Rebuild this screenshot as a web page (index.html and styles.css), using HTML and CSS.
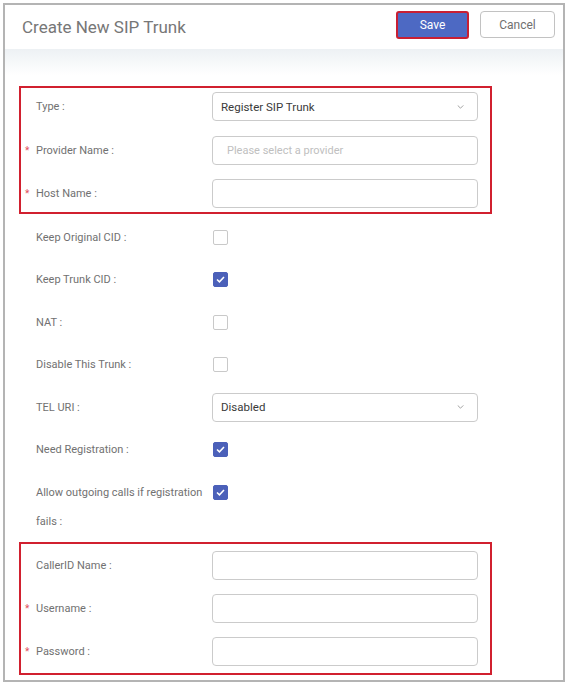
FILE: index.html
```html
<!DOCTYPE html>
<html lang="en">
<head>
<meta charset="utf-8">
<title>Create New SIP Trunk</title>
<link rel="stylesheet" href="styles.css">
</head>
<body>
<div class="frame">
  <header class="header">
    <h1 class="title">Create New SIP Trunk</h1>
    <div class="actions">
      <button class="btn btn-save">Save</button>
      <button class="btn btn-cancel">Cancel</button>
    </div>
  </header>
  <main class="main">
    <section class="box box-top">
      <div class="row">
        <label class="label">Type :</label>
        <div class="select"><span>Register SIP Trunk</span><svg class="chev" viewBox="0 0 8 5" width="7" height="4"><path d="M0.5 0.5 L4 4 L7.5 0.5" fill="none" stroke="#8a8a8a" stroke-width="1"/></svg></div>
      </div>
      <div class="row">
        <label class="label"><span class="req">*</span>Provider Name :</label>
        <div class="input placeholder">Please select a provider</div>
      </div>
      <div class="row">
        <label class="label"><span class="req">*</span>Host Name :</label>
        <div class="input"></div>
      </div>
    </section>

    <div class="plain">
      <div class="row">
        <label class="label">Keep Original CID :</label>
        <span class="check"></span>
      </div>
      <div class="row">
        <label class="label">Keep Trunk CID :</label>
        <span class="check checked"><svg viewBox="0 0 10 8" width="9" height="7"><path d="M1 4 L3.8 6.6 L9 1.2" fill="none" stroke="#fff" stroke-width="1.8"/></svg></span>
      </div>
      <div class="row">
        <label class="label">NAT :</label>
        <span class="check"></span>
      </div>
      <div class="row">
        <label class="label">Disable This Trunk :</label>
        <span class="check"></span>
      </div>
      <div class="row">
        <label class="label">TEL URI :</label>
        <div class="select"><span>Disabled</span><svg class="chev" viewBox="0 0 8 5" width="7" height="4"><path d="M0.5 0.5 L4 4 L7.5 0.5" fill="none" stroke="#8a8a8a" stroke-width="1"/></svg></div>
      </div>
      <div class="row">
        <label class="label">Need Registration :</label>
        <span class="check checked"><svg viewBox="0 0 10 8" width="9" height="7"><path d="M1 4 L3.8 6.6 L9 1.2" fill="none" stroke="#fff" stroke-width="1.8"/></svg></span>
      </div>
      <div class="row row-top">
        <label class="label">Allow outgoing calls if registration fails :</label>
        <span class="check checked check-top"><svg viewBox="0 0 10 8" width="9" height="7"><path d="M1 4 L3.8 6.6 L9 1.2" fill="none" stroke="#fff" stroke-width="1.8"/></svg></span>
      </div>
    </div>

    <section class="box box-bottom">
      <div class="row">
        <label class="label">CallerID Name :</label>
        <div class="input"></div>
      </div>
      <div class="row">
        <label class="label"><span class="req">*</span>Username :</label>
        <div class="input"></div>
      </div>
      <div class="row">
        <label class="label"><span class="req">*</span>Password :</label>
        <div class="input"></div>
      </div>
    </section>
  </main>
</div>
</body>
</html>
```
FILE: styles.css
```css
* { box-sizing: border-box; }
html, body { margin: 0; padding: 0; background: #fff; }
body {
  font-family: Roboto, "Liberation Sans", Arial, sans-serif;
  color: #666;
}
.frame {
  margin: 3px;
  width: 562px;
  height: 679px;
  border: 2px solid #b4b4b4;
  overflow: hidden;
  background: #fff;
}
.header {
  height: 44px;
  display: flex;
  justify-content: space-between;
  align-items: flex-start;
  padding: 0 8px 0 17px;
}
.title {
  margin: 0;
  font-weight: 400;
  font-size: 17px;
  line-height: 44px;
  color: #777;
}
.actions {
  display: flex;
  gap: 11px;
  margin-top: 6px;
}
.btn {
  font-family: inherit;
  font-size: 12px;
  height: 28px;
  border-radius: 3px;
  padding: 0;
  cursor: pointer;
}
.btn-save {
  width: 73px;
  background: #4d69c3;
  color: #fff;
  border: 2px solid #c81f33;
}
.btn-cancel {
  width: 75px;
  height: 27px;
  background: #fff;
  color: #707070;
  border: 1px solid #c2c2c2;
  border-radius: 4px;
}
.main {
  background: linear-gradient(#edf1f4, #fff 26px);
  padding: 37px 0 0 14px;
}
.box {
  width: 473px;
  border: 2px solid #d1202f;
  padding: 4px 12px 4px 15px;
  display: flex;
  flex-direction: column;
  gap: 14.5px;
}
.box-bottom {
  padding-top: 7px;
  padding-bottom: 7px;
  gap: 14px;
}
.plain {
  padding: 8.5px 0 6.5px 17px;
  display: flex;
  flex-direction: column;
  gap: 13.5px;
}
.row {
  display: flex;
  align-items: center;
  min-height: 29px;
}
.row-top { align-items: flex-start; }
.label {
  width: 176px;
  flex: none;
  font-size: 11px;
  line-height: 29px;
  color: #717171;
  padding-right: 4px;
}
.req {
  display: inline-block;
  width: 11px;
  margin-left: -11px;
  color: #e0505a;
  font-size: 10px;
}
.select, .input {
  width: 266px;
  height: 29px;
  border: 1px solid #cbcbcb;
  border-radius: 4px;
  background: #fff;
  font-size: 11.5px;
  color: #3a3a3a;
  display: flex;
  align-items: center;
}
.select {
  justify-content: space-between;
  padding: 0 13px 0 8px;
}
.input { padding: 0 14px; }
.placeholder { color: #c0c0c0; font-size: 11px; }
.chev { display: block; }
.check {
  width: 15px;
  height: 15px;
  margin-left: 1px;
  border: 1px solid #c9c9c9;
  border-radius: 2px;
  display: flex;
  align-items: center;
  justify-content: center;
  background: #fff;
}
.check.checked {
  background: #4b60b9;
  border-color: #4b60b9;
}
.check-top { margin-top: 7px; }
```
